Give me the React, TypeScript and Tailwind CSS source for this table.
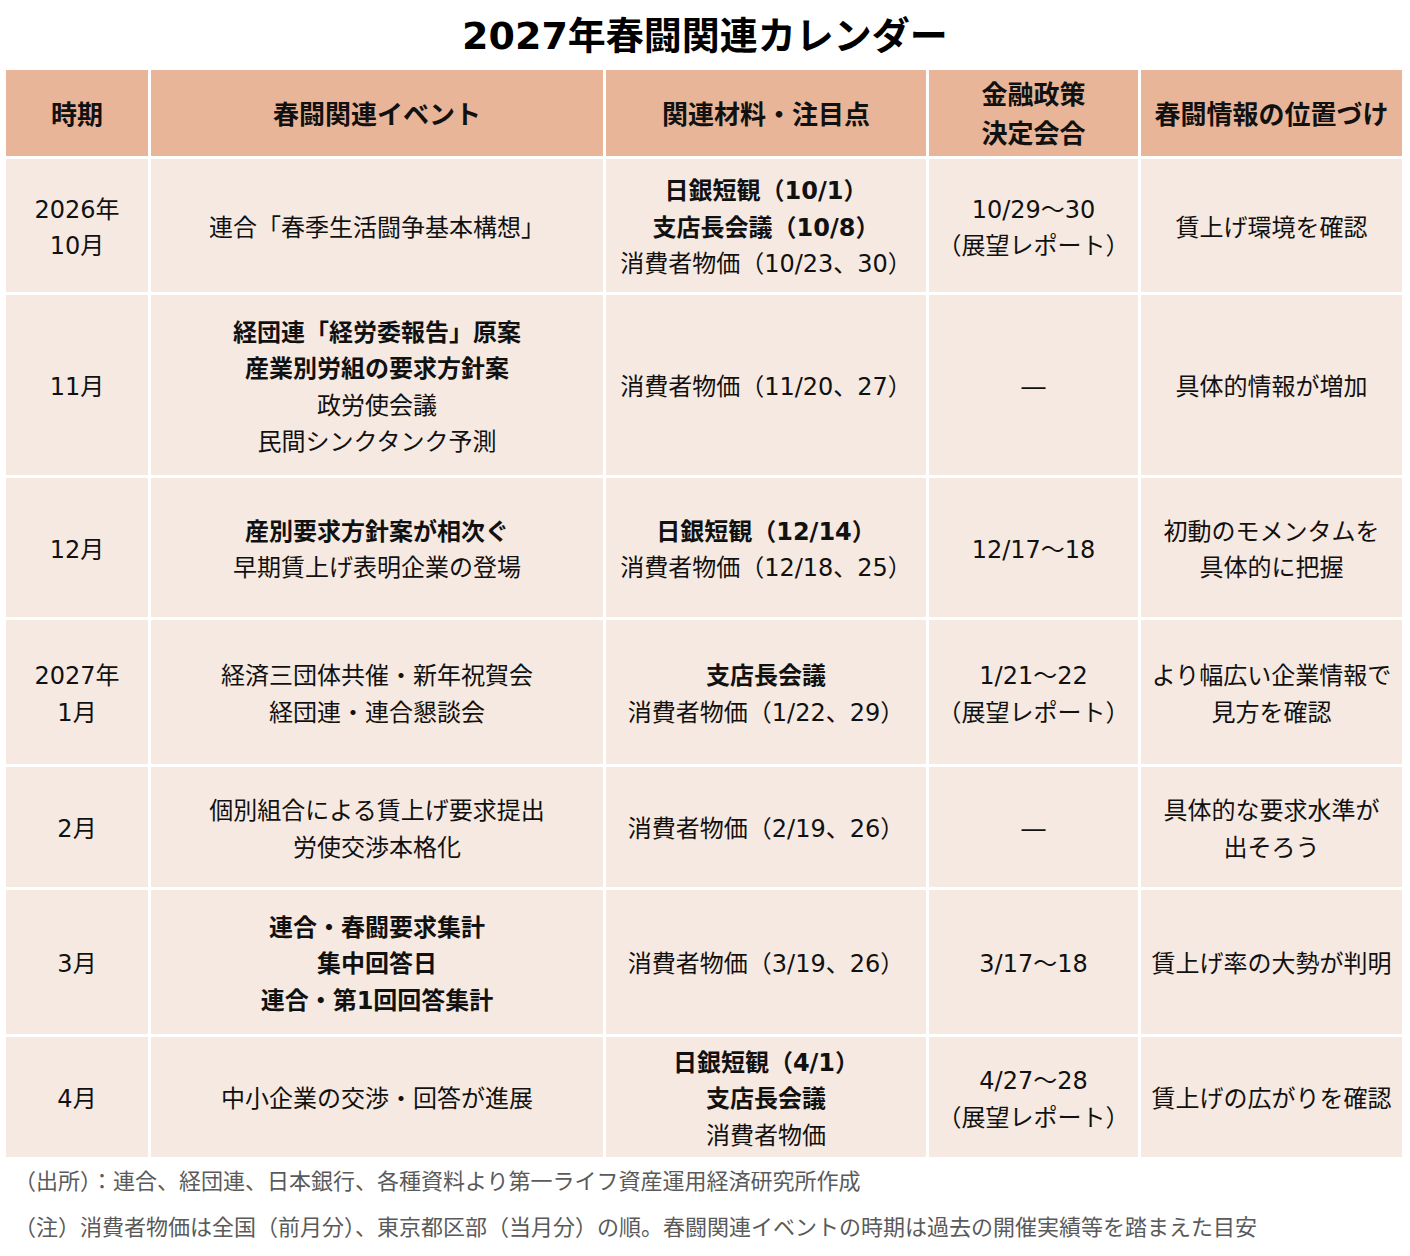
const FONT = { fontFamily: '"DejaVu Sans", "Noto Sans CJK JP", sans-serif' };

type Line = { t: string; b?: boolean };
type Row = { h: string; cells: Line[][] };

const b = (t: string): Line => ({ t, b: true });
const n = (t: string): Line => ({ t });

const HEAD = ["時期", "春闘関連イベント", "関連材料・注目点", "金融政策\n決定会合", "春闘情報の位置づけ"];

const ROWS: Row[] = [
  {
    h: "h-[133px]",
    cells: [
      [n("2026年"), n("10月")],
      [n("連合「春季生活闘争基本構想」")],
      [b("日銀短観（10/1）"), b("支店長会議（10/8）"), n("消費者物価（10/23、30）")],
      [n("10/29～30"), n("（展望レポート）")],
      [n("賃上げ環境を確認")],
    ],
  },
  {
    h: "h-[180px]",
    cells: [
      [n("11月")],
      [b("経団連「経労委報告」原案"), b("産業別労組の要求方針案"), n("政労使会議"), n("民間シンクタンク予測")],
      [n("消費者物価（11/20、27）")],
      [n("―")],
      [n("具体的情報が増加")],
    ],
  },
  {
    h: "h-[139px]",
    cells: [
      [n("12月")],
      [b("産別要求方針案が相次ぐ"), n("早期賃上げ表明企業の登場")],
      [b("日銀短観（12/14）"), n("消費者物価（12/18、25）")],
      [n("12/17～18")],
      [n("初動のモメンタムを"), n("具体的に把握")],
    ],
  },
  {
    h: "h-[144px]",
    cells: [
      [n("2027年"), n("1月")],
      [n("経済三団体共催・新年祝賀会"), n("経団連・連合懇談会")],
      [b("支店長会議"), n("消費者物価（1/22、29）")],
      [n("1/21～22"), n("（展望レポート）")],
      [n("より幅広い企業情報で"), n("見方を確認")],
    ],
  },
  {
    h: "h-[120px]",
    cells: [
      [n("2月")],
      [n("個別組合による賃上げ要求提出"), n("労使交渉本格化")],
      [n("消費者物価（2/19、26）")],
      [n("―")],
      [n("具体的な要求水準が"), n("出そろう")],
    ],
  },
  {
    h: "h-[144px]",
    cells: [
      [n("3月")],
      [b("連合・春闘要求集計"), b("集中回答日"), b("連合・第1回回答集計")],
      [n("消費者物価（3/19、26）")],
      [n("3/17～18")],
      [n("賃上げ率の大勢が判明")],
    ],
  },
  {
    h: "h-[120px]",
    cells: [
      [n("4月")],
      [n("中小企業の交渉・回答が進展")],
      [b("日銀短観（4/1）"), b("支店長会議"), n("消費者物価")],
      [n("4/27～28"), n("（展望レポート）")],
      [n("賃上げの広がりを確認")],
    ],
  },
];

function Cell({ lines, h }: { lines: Line[]; h: string }) {
  return (
    <div className={`${h} flex flex-col items-center justify-center bg-[#f6e9e1] pt-[5px] text-center text-[24px] leading-[36.5px] text-[#111]`}>
      {lines.map((l, i) => (
        <div key={i} className={l.b ? "font-bold" : "font-normal"}>
          {l.t}
        </div>
      ))}
    </div>
  );
}

export default function App() {
  return (
    <div className="w-[1410px] h-[1256px] bg-white" style={FONT}>
      <h1 className="h-[70px] pt-[9px] text-center text-[38px] font-bold leading-[54px] text-black">
        2027年春闘関連カレンダー
      </h1>

      <div className="ml-[6px] grid w-[1396px] grid-cols-[142px_452px_320px_209px_261px] gap-[3px] bg-white">
        {HEAD.map((t) => (
          <div
            key={t}
            className="flex h-[86px] items-center justify-center whitespace-pre-line bg-[#e8b598] pt-[4px] text-center text-[26px] font-bold leading-[39px] text-[#111]"
          >
            {t}
          </div>
        ))}
        {ROWS.map((r, ri) =>
          r.cells.map((c, ci) => <Cell key={`${ri}-${ci}`} lines={c} h={r.h} />)
        )}
      </div>

      <div className="mt-[2px] pl-[14px] text-[22px] leading-[46px] text-[#5a5a5a]">
        <p>（出所）：連合、経団連、日本銀行、各種資料より第一ライフ資産運用経済研究所作成</p>
        <p>（注）消費者物価は全国（前月分）、東京都区部（当月分）の順。春闘関連イベントの時期は過去の開催実績等を踏まえた目安</p>
      </div>
    </div>
  );
}
